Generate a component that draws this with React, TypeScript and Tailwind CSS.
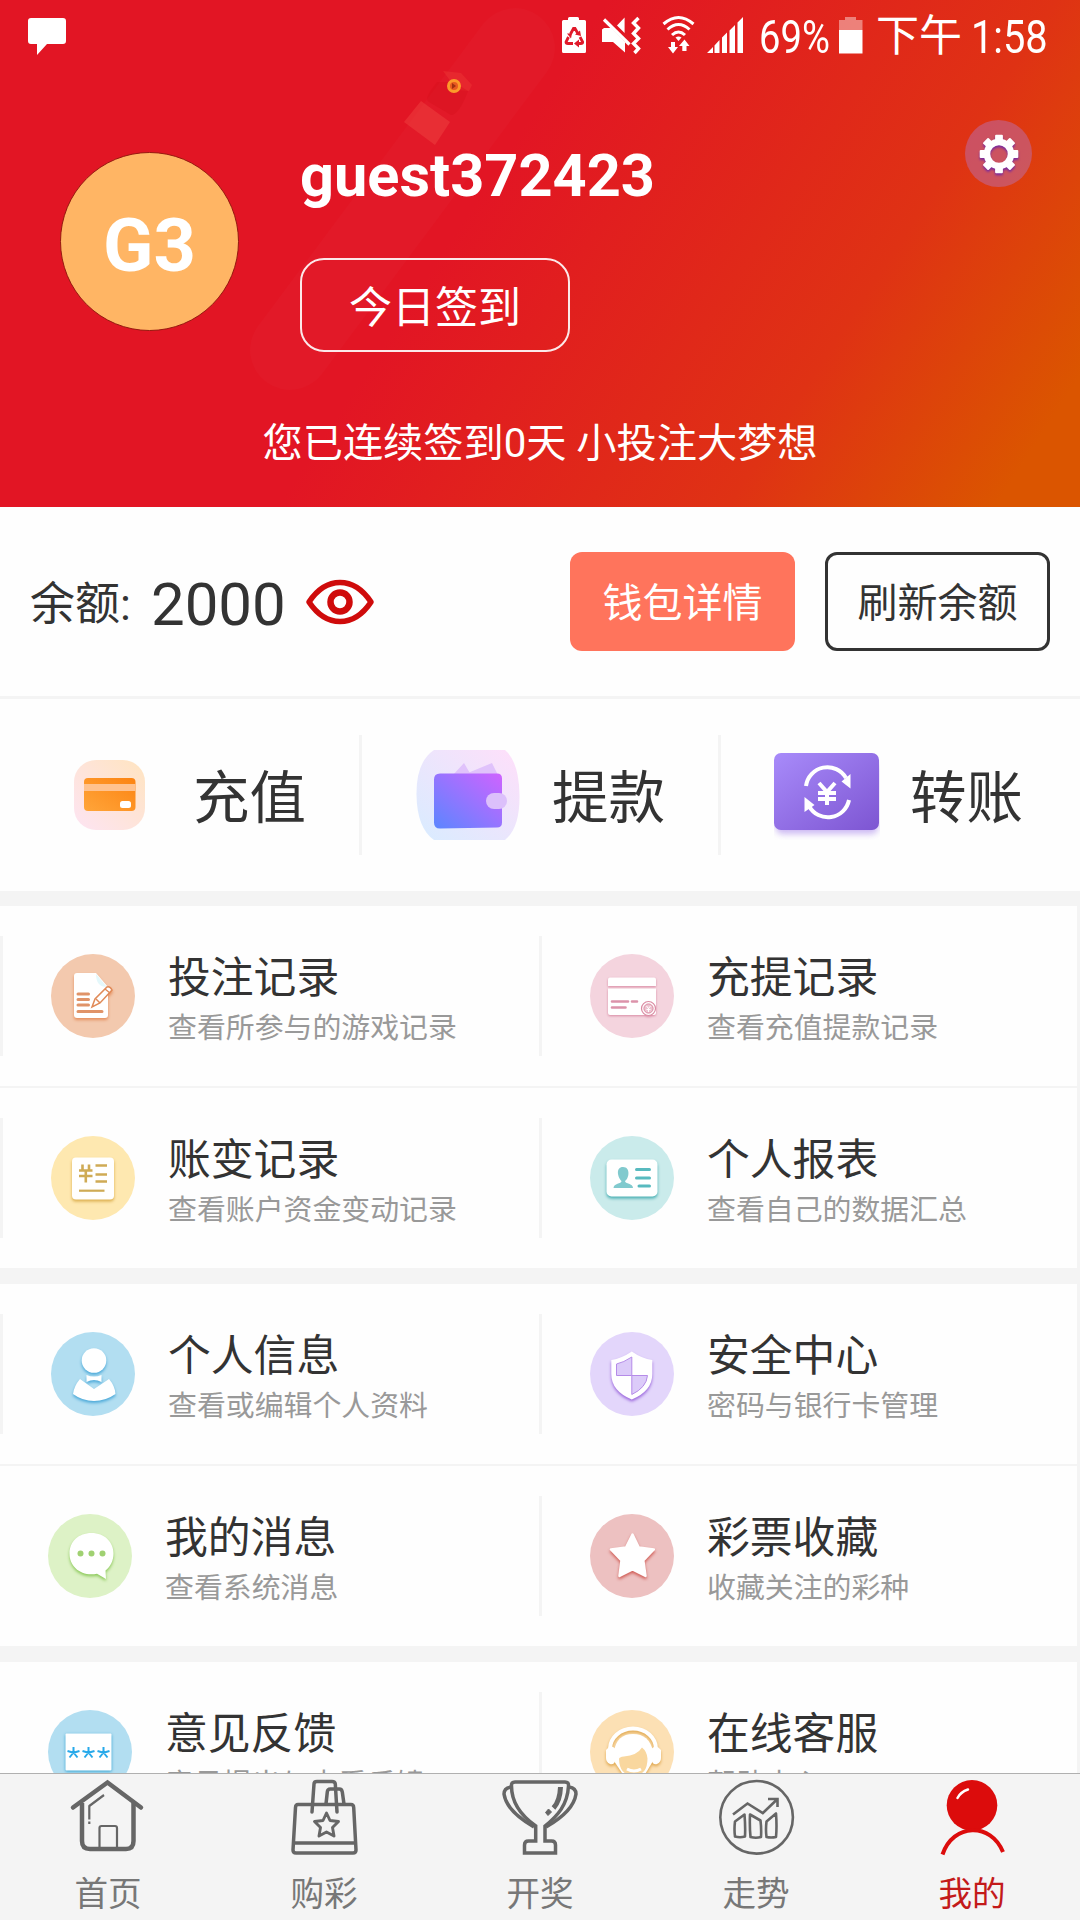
import React from "react";

type Kids = { children: React.ReactNode };

function StatusBar() {
  return (
    <div className="relative flex h-[72px] items-start text-white">
      <svg className="absolute left-[22px] top-[18px] h-[38px] w-[44px]" viewBox="0 0 44 38" fill="currentColor">
        <path d="M9 0h32a3 3 0 0 1 3 3v20a3 3 0 0 1-3 3H25L15 37V26H9a3 3 0 0 1-3-3V3a3 3 0 0 1 3-3z" />
      </svg>
      <div className="absolute right-[33px] top-0 flex h-[72px] w-[485px]">
        <svg className="h-[72px] w-[305px] shrink-0" viewBox="562 0 305 72" fill="currentColor">
          <path d="M568 20V18.500q0-1.500 1.500-1.500h8q1.500 0 1.500 1.500V20h5.500q1.500 0 1.500 1.500v30q0 1.500-1.500 1.500h-21q-1.500 0-1.500-1.500v-30q0-1.500 1.500-1.500z" />
          <g fill="none" stroke="#e0192a" strokeWidth="2.800">
            <path d="M570.500 34l3-5.500h1.500l3.200 5.500M568.500 37l-2.500 5q0 1.500 2 1.500h5M580 37l2.700 5q0 1.500-2 1.500h-4.500" />
          </g>
          <path d="M572 33.500h-5l4 5zM581 36l-6-1.500 5-4zM579 39.500v8l-5-4z" fill="#e0192a" />
          <g transform="translate(600 14)">
            <path d="M2 15.500l2-1.500h7l14 14v10.500L13 28H2zM17 11.500L24.600 3.500V19z" />
            <path d="M4 5.500L29.500 30.500" stroke="currentColor" strokeWidth="3.200" />
            <path d="M38.500 4l-5 5 5 5-5 5.500 5 5-5 5 5 5-4 4.500" fill="none" stroke="currentColor" strokeWidth="3.400" />
          </g>
          <g fill="none" stroke="currentColor" strokeWidth="3">
            <path d="M663.500 24q15-13 30 0M667.500 29.500q11-10 22 0M672 35q6.500-6 13 0" />
          </g>
          <path d="M675.500 37.500q3-2 6 0l-3 3.500z" />
          <path d="M671 42v5h-3l5 6.500 5-6.500h-3v-5zM682.300 51v-5H679l5.500-6.500 5 6.500h-3v5z" />
          <path d="M707 53l6-6v6zM714.500 53V45.500L719.500 40v13zM722 53V37.500l5-5V53zM729.500 53V30.500l5.500-5.500V53zM737.500 53V22.500l5.500-5.500V53z" />
          <path d="M839 30V20h6v-3h11v3h6.500v10z" opacity=".42" />
          <path d="M839 30h23.500v23.500H839z" />
        </svg>
        <span className="absolute left-[197px] top-[10px] origin-left scale-x-[.83] text-[46px] leading-[54px]">69%</span>
        <span className="absolute left-[314px] top-[9px] whitespace-nowrap text-[43px] leading-[54px]">下午</span>
        <span className="absolute left-[409px] top-[10px] origin-left scale-x-[.865] text-[46px] leading-[54px]">1:58</span>
      </div>
    </div>
  );
}

function HeaderArt() {
  return (
    <svg className="absolute inset-0 h-full w-full" viewBox="0 0 1080 507">
      <path d="M515 48L290 350" stroke="#fff" strokeOpacity=".02" strokeWidth="80" strokeLinecap="round" />
      <path d="M443 71l18 2 11 12-3 6-12-1z" fill="#ee3a35" opacity=".45" />
      <path d="M437 82q-14 17-8 20l22 13q8 0 17-24l-14-9z" fill="#d80f1c" opacity=".4" />
      <path d="M421 101l29 21-15 23-31-23z" fill="#f5524c" opacity=".36" />
      <circle cx="454" cy="86" r="5.500" fill="#e85a20" stroke="#fc9a2a" strokeWidth="3" />
      <path d="M452 83l4 3-4 3z" fill="#a03010" />
    </svg>
  );
}

function Gear() {
  return (
    <div className="absolute right-[48px] top-[120px] flex h-[67px] w-[67px] items-center justify-center rounded-full bg-[#b675c1]/45">
      <svg className="h-[42px] w-[42px] drop-shadow-[0_2px_1px_#7a2a9c]" viewBox="-21 -21 42 42">
        <circle r="12" fill="none" stroke="#fff" strokeWidth="6.500" />
        {[0, 45, 90, 135, 180, 225, 270, 315].map((a) => (
          <rect key={a} x="-3.900" y="-19.300" width="7.800" height="8" rx="1" fill="#fff" transform={`rotate(${a})`} />
        ))}
      </svg>
    </div>
  );
}

function Header() {
  return (
    <header className="relative h-[507px] bg-[linear-gradient(123deg,#e21524_0%,#e21524_43%,#df3214_75%,#db5500_94%,#db5500_100%)] text-white">
      <HeaderArt />
      <StatusBar />
      <Gear />
      <div className="relative flex h-[330px] pl-[60px]">
        <div className="mt-[80px] flex h-[179px] w-[179px] items-center justify-center rounded-full border border-[#96180f] bg-[#ffb564] pt-2 text-[74px] font-bold">
          G3
        </div>
        <div className="ml-[61px] mt-[68px]">
          <div className="text-[59.500px] font-bold leading-[72px]">guest372423</div>
          <button className="mt-[46px] flex h-[94px] w-[270px] items-center justify-center rounded-[24px] border-2 border-white/90 pt-[6px] text-[43px]">
            今日签到
          </button>
        </div>
      </div>
      <p className="relative mt-[12px] text-center text-[40.200px] leading-[60px]">您已连续签到0天 小投注大梦想</p>
    </header>
  );
}

function Balance() {
  return (
    <section className="flex h-[192px] items-start border-b-[3px] border-[#f4f4f4] pl-[30px] pr-[30px] pt-[45px]">
      <div className="flex h-[99px] items-center">
        <span className="pt-[6px] text-[45px]">余额:</span>
        <span className="ml-[20px] pt-[6px] text-[60px]">2000</span>
        <svg className="ml-[19px] h-[46px] w-[70px]" viewBox="0 0 68 46" fill="none" stroke="#cf0b0b">
          <path d="M3 23Q16 3.500 34 3.500T65 23Q52 42.500 34 42.500T3 23z" strokeWidth="5.600" strokeLinejoin="round" />
          <circle cx="34" cy="23" r="9.500" strokeWidth="6.500" />
        </svg>
      </div>
      <button className="ml-auto h-[99px] w-[225px] rounded-[12px] bg-[#ff745c] pt-[5px] text-[40px] text-white">钱包详情</button>
      <button className="ml-[30px] h-[99px] w-[225px] rounded-[12px] border-[3px] border-[#333] pt-[5px] text-[40px]">刷新余额</button>
    </section>
  );
}

function DepositIcon() {
  return (
    <svg className="h-[90px] w-[106px]" viewBox="56 750 106 90">
      <defs>
        <linearGradient id="dep" x1="0" y1="1" x2="1" y2="0"><stop stopColor="#fde4f3" /><stop offset="1" stopColor="#ffe4c0" /></linearGradient>
        <linearGradient id="card" x1="0" y1="1" x2="1" y2="0"><stop stopColor="#ffa53a" /><stop offset="1" stopColor="#fc8412" /></linearGradient>
      </defs>
      <rect x="74" y="760" width="71" height="70" rx="22" fill="url(#dep)" />
      <rect x="84" y="778" width="51.500" height="33" rx="4" fill="url(#card)" />
      <path d="M84 784h51.500v7H84z" fill="#ffc28e" />
      <rect x="120" y="801" width="11" height="7" rx="2.500" fill="#fff" />
    </svg>
  );
}

function WithdrawIcon() {
  return (
    <svg className="h-[90px] w-[106px]" viewBox="415 750 106 90">
      <defs>
        <linearGradient id="wbg" x1="0" y1="1" x2="1" y2="0"><stop stopColor="#d8ecff" /><stop offset="1" stopColor="#ffdffa" /></linearGradient>
        <linearGradient id="wal" x1="0" y1="1" x2="1" y2="0"><stop stopColor="#5b86ff" /><stop offset="1" stopColor="#cf63ff" /></linearGradient>
      </defs>
      <path d="M434 750h71q14 12 14.500 45t-14.500 45h-71q-17-12-17.500-45t17.500-45z" fill="url(#wbg)" />
      <path d="M453 775l11-12 7 12zM463 775l29-12 6 12z" fill="#e0c2fb" />
      <path d="M440 773.500h57q5 0 5 5v44q0 5-5 5l-57 1q-6 0-6-6v-43q0-6 6-6z" fill="url(#wal)" />
      <rect x="486" y="793" width="21" height="16" rx="8" fill="#dcc0fb" />
    </svg>
  );
}

function TransferIcon() {
  return (
    <svg className="h-[90px] w-[106px]" viewBox="774 750 106 90">
      <defs>
        <linearGradient id="tr" x1="0" y1="0" x2="1" y2="1"><stop stopColor="#a88bfa" /><stop offset="1" stopColor="#7d55d2" /></linearGradient>
      </defs>
      <rect x="776" y="762" width="102" height="72" rx="6" fill="#b79bee" className="blur-[3px]" opacity=".7" />
      <rect x="774" y="753" width="105" height="77" rx="7" fill="url(#tr)" />
      <g fill="none" stroke="#fff" strokeWidth="4">
        <path d="M806 786a21.500 21.500 0 0 1 40-8M849 800a21.500 21.500 0 0 1-40 6" />
        <path d="M819 783l8 9 8-9M827 791v14M818 793h18M818 799h18" strokeWidth="4" />
      </g>
      <path d="M850.500 774v14.500l-9-7zM804.500 812v-15l10 8z" fill="#fff" />
    </svg>
  );
}

function Actions() {
  const items = [
    { label: "充值", icon: <DepositIcon />, box: "w-[362px] border-r-[3px] pl-[56px]", gap: "ml-[31px]" },
    { label: "提款", icon: <WithdrawIcon />, box: "w-[359px] border-r-[3px] pl-[53px]", gap: "ml-[31px]" },
    { label: "转账", icon: <TransferIcon />, box: "w-[359px] pl-[53px]", gap: "ml-[30px]" },
  ];
  return (
    <section className="flex h-[192px] items-start pt-[36px]">
      {items.map((it) => (
        <div key={it.label} className={`flex h-[120px] shrink-0 items-center border-[#f4f4f4] ${it.box}`}>
          {it.icon}
          <span className={`whitespace-nowrap pt-[7px] text-[56.500px] leading-[80px] ${it.gap}`}>{it.label}</span>
        </div>
      ))}
    </section>
  );
}

function Disc({ bg, shadow, children }: Kids & { bg: string; shadow: string }) {
  return (
    <svg className="h-[84px] w-[84px] shrink-0" viewBox="0 0 84 84">
      <circle cx="42" cy="42" r="42" fill={bg} />
      <g className={shadow} fill="#fff">{children}</g>
    </svg>
  );
}

const betIcon = (
  <Disc bg="#f3c9ae" shadow="drop-shadow-[0_2px_1.5px_#e58f5e]">
    <path d="M26 19h19l12 14v28q0 3-3 3H26q-3 0-3-3V22q0-3 3-3z" />
    <path d="M45 20l11 13q-11 0-11-13z" fill="#e4f8fb" />
    <path d="M27 40h10.500M27 45.500h10.500M27 51h10.500M27 57.500h24" stroke="#e09368" strokeWidth="3" strokeLinecap="round" />
    <path d="M41 53l3-8 12-12q3-1 5 3L49 49z" stroke="#e08a58" strokeWidth="1.500" />
    <path d="M54 35l5 4M45 45l4 4" stroke="#e08a58" strokeWidth="1.500" />
  </Disc>
);

const cashIcon = (
  <Disc bg="#f4d4de" shadow="drop-shadow-[0_1px_1px_#d98aa3]">
    <path d="M20 23.500h44q2 0 2 2V32H18v-6.500q0-2 2-2z" />
    <path d="M18 34.500h48V59q0 2-2 2H20q-2 0-2-2z" />
    <path d="M22 47.500h16M42 47.500h5M22 53.500h13.500" stroke="#dc93aa" strokeWidth="2.600" strokeLinecap="round" />
    <circle cx="58.500" cy="54.500" r="7" stroke="#db8aa2" strokeWidth="1.200" />
    <circle cx="58.500" cy="54.500" r="4.600" fill="#edc3d0" stroke="#db8aa2" strokeWidth="1" />
    <path d="M56.500 52l2 2.500 2-2.500M58.500 54v4M56.500 55.500h4" stroke="#fff" fill="none" />
  </Disc>
);

const ledgerIcon = (
  <Disc bg="#fee8b0" shadow="drop-shadow-[0_2px_1.5px_#dcae4c]">
    <rect x="21" y="21.500" width="42" height="42" rx="4" />
    <g fill="none" stroke="#cfab55" strokeWidth="2.600">
      <path d="M31.500 28.500v5M38 28.500v5M28 34.500h13.500M28 40h13.500M34.800 34v12.500M44.500 29.500H56M44.500 38.500H56M44.500 45.500H56" />
      <path d="M28 54.700h25.500" strokeWidth="2.200" />
    </g>
  </Disc>
);

const reportIcon = (
  <Disc bg="#caebeb" shadow="drop-shadow-[0_2px_1.5px_#47aeb2]">
    <rect x="16.500" y="23.500" width="51" height="37" rx="5" />
    <path d="M33 31c8 0 6 12 2 14 0 3 8 2 8 7H23.500c0-5 8-4 8-7-4-4-6-14 1.500-14z" fill="#81cace" />
    <path d="M46.500 33.500h13M46.500 42h13M49 50h10.500" stroke="#58babf" strokeWidth="3" strokeLinecap="round" />
  </Disc>
);

const personIcon = (
  <Disc bg="#b2def1" shadow="drop-shadow-[0_2px_1.5px_#4aa8d8]">
    <circle cx="43" cy="28.500" r="12.300" />
    <path d="M35.500 43q7.500 3 15 0v7q-7.500-4-15 0z" />
    <path d="M29 47l14 10 15-10q6 7 6.500 15-10 7-21.500 7T22 62q1-8 7-15z" />
  </Disc>
);

const shieldIcon = (
  <Disc bg="#e3d6fb" shadow="drop-shadow-[0_2px_1.5px_#9a66dc]">
    <path d="M41.800 19.500q10 7 20.500 8.500v14q0 17-20.500 25.500Q21.300 59 21.300 42V28q10-1.500 20.500-8.500z" />
    <path d="M41.800 25v18.500H26.500V32q7-1.500 15.300-7z" fill="#dccbf9" stroke="#b58be8" />
    <path d="M41.800 43.500h15.700q-1 12-15.700 19z" fill="#dccbf9" stroke="#b58be8" />
  </Disc>
);

const messageIcon = (
  <Disc bg="#ddf2c6" shadow="drop-shadow-[0_2px_1.5px_#8cc95a]">
    <path d="M43.500 19c13 0 22 9 22 20.500 0 7-3 13-8 17L58 65l-9-5.200q-3 .5-5.500.5c-13 0-22-9-22-20.800S30.500 19 43.500 19z" />
    <g fill="#a0d172"><circle cx="32.500" cy="39.500" r="3" /><circle cx="43.500" cy="39.500" r="3" /><circle cx="54.500" cy="39.500" r="3" /></g>
  </Disc>
);

const starIcon = (
  <Disc bg="#edc1c1" shadow="drop-shadow-[0_2px_1.5px_#d05c55]">
    <path d="M42.500 20.500l6.300 13 15 2-10.500 11L55.500 62l-13-6.500-13 6.500 2-15.500-10.500-11 15-2z" stroke="#fff" strokeWidth="2.500" strokeLinejoin="round" />
  </Disc>
);

const feedbackIcon = (
  <Disc bg="#b2def1" shadow="drop-shadow-[0_1px_1.5px_#2b9fd0]">
    <rect x="17.500" y="23.500" width="46" height="37" rx="1" />
    <path d="M25.500 37v5.500M19.500 41l6 1.800 6-1.800M21.500 47.500l4-5 4 5M40.500 37v5.500M34.500 41l6 1.800 6-1.800M36.500 47.500l4-5 4 5M55.500 37v5.500M49.500 41l6 1.800 6-1.800M51.500 47.500l4-5 4 5" stroke="#27a9ea" strokeWidth="2" fill="none" />
  </Disc>
);

const serviceIcon = (
  <Disc bg="#fce0b4" shadow="drop-shadow-[0_2px_1.5px_#e0a850]">
    <path d="M20 39a23 20.500 0 0 1 46 0" fill="none" stroke="#fff" strokeWidth="4" />
    <path d="M23 37q3 1 2 4v10q-1 4-5 3-4-2-4-6v-8q3-4 7-3zM64 37q-3 1-2 4v10q1 4 5 3 4-2 4-6v-8q-3-4-7-3z" />
    <path d="M24 41q3-17 19-17t20 17v10L54 66H34L24 51z" />
    <path d="M29 49q0-2 5-2.500 13-1 18-9 5 4 5.500 11 0 17-14 17T29 49z" fill="#f9d79e" />
    <path d="M37 59q7 4 14 0" fill="none" stroke="#fff" strokeWidth="3" />
  </Disc>
);

type Item = { title: string; sub: string; icon: React.ReactNode };

function Row({ left, right, edge, line }: { left: Item; right: Item; edge?: boolean; line?: boolean }) {
  return (
    <div className={`flex items-start pt-[30px] ${line ? "h-[182px] border-b-2 border-[#f4f4f4]" : "h-[180px]"}`}>
      <Cell item={left} box={edge ? "w-[542px] border-x-[3px] pl-[48px]" : "w-[542px] border-r-[3px] pl-[48px]"} />
      <Cell item={right} box="w-[535px] pl-[48px]" />
    </div>
  );
}

function Cell({ item, box }: { item: Item; box: string }) {
  return (
    <div className={`flex h-[120px] shrink-0 border-[#f4f4f4] pt-[18px] ${box}`}>
      {item.icon}
      <div className="ml-[33px] whitespace-nowrap">
        <div className="-mt-[5px] text-[42.800px] leading-[58px]">{item.title}</div>
        <div className="text-[28.900px] leading-[42px] text-[#999]">{item.sub}</div>
      </div>
    </div>
  );
}

function Group({ children }: Kids) {
  return <section className="mb-[16px] mr-[3px] bg-[#fefefe]">{children}</section>;
}

function TabIcon({ children, color = "#666" }: Kids & { color?: string }) {
  return (
    <svg className="h-[80px] w-[80px]" viewBox="0 0 80 80" fill="none" stroke={color} strokeWidth="3.500" strokeLinejoin="round">
      {children}
    </svg>
  );
}

function Tab({ label, active, children }: Kids & { label: string; active?: boolean }) {
  return (
    <div className={`flex w-[216px] flex-col items-center pt-[2px] ${active ? "text-[#c31a1a]" : "text-[#777]"}`}>
      {children}
      <span className="mt-[15px] text-[33.600px] leading-[48px]">{label}</span>
    </div>
  );
}

function TabBar() {
  return (
    <nav className="flex h-[147px] shrink-0 border-t border-[#b0b0b0] bg-[#f4f4f4]">
      <Tab label="首页">
        <TabIcon>
          <path d="M5 31.500L39.500 6.500l33.500 25" strokeWidth="4.500" strokeLinecap="round" strokeLinejoin="miter" />
          <path d="M14 27v38q0 8 8 8h36q7.500 0 7.500-8V27" strokeWidth="4.500" />
          <path d="M31.500 72V52q0-2 2-2h13.500q2 0 2 2v20M36 19L21.300 30v13.500M21.300 45.500v2.500" strokeWidth="2.200" />
        </TabIcon>
      </Tab>
      <Tab label="购彩">
        <TabIcon>
          <path d="M14 28.500h53q2.500 0 2.700 3L72 74q0 3-3 3H12q-3 0-3-3l2.500-42.500q.200-3 2.500-3zM10 67h61" />
          <path d="M28 36L30 8q0-2.500 3-2.500h15q3 0 3.300 2.500L53 36M42 28l1.300-12q.300-3 3-3h9q2.500 0 3 3L60 28" strokeLinecap="round" />
          <path d="M42.500 37l3.500 7.500 8.500 1-6 6 1.500 8.500-7.500-4-7.500 4 1.500-8.500-6-6 8.500-1z" strokeWidth="2.900" />
        </TabIcon>
      </Tab>
      <Tab label="开奖">
        <TabIcon>
          <path d="M15 6h50q4 0 3.500 4c-1 19-11 30-23.500 40v15h6.500q4 0 4 4v8h-31v-8q0-4 4-4h7.200V50C23 41 11.500 29 11.500 10Q11 6 15 6z" strokeLinejoin="miter" />
          <path d="M11 11q-7 1-7 7c2 14 16 25 30 33M69 11q7 1 7 7c-2 14-16 25-30 33" />
          <path d="M60.500 11q-.5 14-7 21" strokeWidth="5" />
          <path d="M48.500 33l3 3-3.500 3.500-2.500-3z" strokeWidth="1" fill="#666" />
        </TabIcon>
      </Tab>
      <Tab label="走势">
        <TabIcon>
          <g strokeWidth="2.600">
            <circle cx="40.600" cy="41.300" r="36.300" />
            <path d="M17 38.500L31.500 27.500 46.800 37 61 23.500M52 23h9.500v8" strokeLinejoin="miter" />
            <path d="M19 45.500l9.500-7q1 12 .5 22-5 1.500-10 0-1-7 0-15zM34 38.500l10.500 6q1 8 .5 16.500-5 1.500-10.500 0-1-10-.5-22.500zM50.500 45.500l9.500-8q1 13 0 23.500-5 1-9.500 0-1-7 0-15.500z" />
          </g>
        </TabIcon>
      </Tab>
      <Tab label="我的" active>
        <TabIcon color="#dc0c0c">
          <circle cx="40" cy="29.300" r="25.300" fill="#dc0c0c" stroke="none" />
          <path d="M10.500 78.500C21 47 59 46 71 76" strokeWidth="4" />
          <path d="M25.500 22q3-6 10.500-8.500" stroke="#fff" strokeWidth="2.500" strokeLinecap="round" />
        </TabIcon>
      </Tab>
    </nav>
  );
}

export default function App() {
  return (
    <div className="flex h-[1920px] w-[1080px] flex-col overflow-hidden bg-[#f4f4f4] font-['Roboto','Noto_Sans_CJK_SC',sans-serif] text-[#333]">
      <div className="h-[1773px] shrink-0 overflow-hidden">
        <Header />
        <div className="mb-[15px] bg-[#fefefe]">
          <Balance />
          <Actions />
        </div>
        <Group>
          <Row edge line left={{ title: "投注记录", sub: "查看所参与的游戏记录", icon: betIcon }} right={{ title: "充提记录", sub: "查看充值提款记录", icon: cashIcon }} />
          <Row edge left={{ title: "账变记录", sub: "查看账户资金变动记录", icon: ledgerIcon }} right={{ title: "个人报表", sub: "查看自己的数据汇总", icon: reportIcon }} />
        </Group>
        <Group>
          <Row edge line left={{ title: "个人信息", sub: "查看或编辑个人资料", icon: personIcon }} right={{ title: "安全中心", sub: "密码与银行卡管理", icon: shieldIcon }} />
          <Row left={{ title: "我的消息", sub: "查看系统消息", icon: messageIcon }} right={{ title: "彩票收藏", sub: "收藏关注的彩种", icon: starIcon }} />
        </Group>
        <Group>
          <Row left={{ title: "意见反馈", sub: "意见提出与查看反馈", icon: feedbackIcon }} right={{ title: "在线客服", sub: "帮助中心", icon: serviceIcon }} />
        </Group>
      </div>
      <TabBar />
    </div>
  );
}
